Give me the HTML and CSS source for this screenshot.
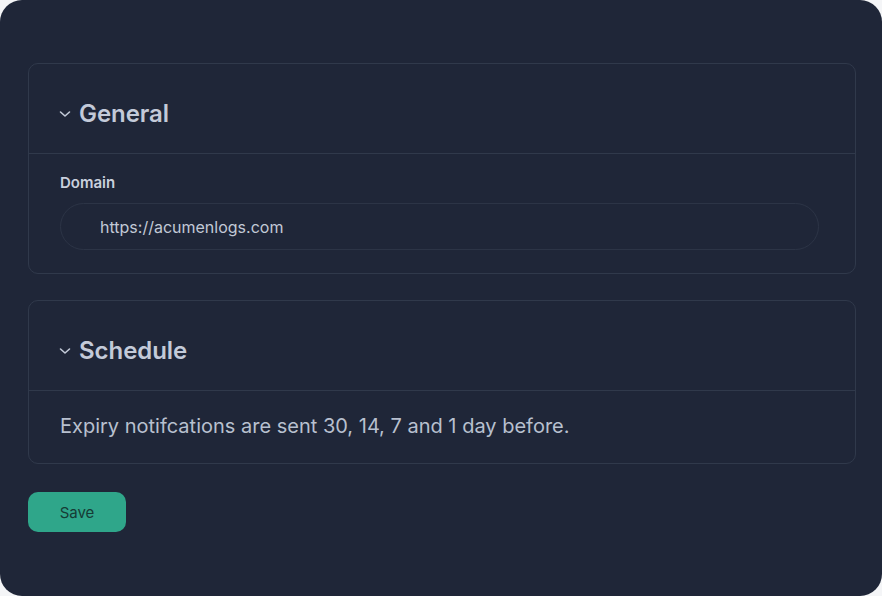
FILE: index.html
```html
<!DOCTYPE html>
<html>
<head>
<meta charset="utf-8">
<link rel="stylesheet" href="styles.css">
</head>
<body>
<div class="frame">
  <section class="card">
    <div class="card-head">
      <svg class="chev" width="12" height="12" viewBox="0 0 12 12"><path d="M1.5 4 L6 8 L10.5 4" fill="none" stroke="#c3cad8" stroke-width="1.6" stroke-linecap="round" stroke-linejoin="round"/></svg>
      <h2 class="card-title">General</h2>
    </div>
    <div class="card-body general-body">
      <label class="label">Domain</label>
      <div class="input">https://acumenlogs.com</div>
    </div>
  </section>
  <section class="card">
    <div class="card-head">
      <svg class="chev" width="12" height="12" viewBox="0 0 12 12"><path d="M1.5 4 L6 8 L10.5 4" fill="none" stroke="#c3cad8" stroke-width="1.6" stroke-linecap="round" stroke-linejoin="round"/></svg>
      <h2 class="card-title">Schedule</h2>
    </div>
    <div class="card-body schedule-body">
      <p class="note">Expiry notifcations are sent 30, 14, 7 and 1 day before.</p>
    </div>
  </section>
  <div class="actions">
    <button class="save">Save</button>
  </div>
</div>
</body>
</html>
```
FILE: styles.css
```css
html, body {
  margin: 0;
  padding: 0;
  background: #f4f5f7;
}
body {
  font-family: Inter, "Noto Sans", sans-serif;
}
.frame {
  width: 882px;
  height: 596px;
  box-sizing: border-box;
  background: #1f2638;
  border-radius: 22px;
  padding: 63px 26px 0 28px;
  display: flex;
  flex-direction: column;
  gap: 26px;
}
.card {
  border: 1px solid #30394b;
  border-radius: 10px;
}
.card-head {
  height: 90px;
  box-sizing: border-box;
  padding-top: 10px;
  display: flex;
  align-items: center;
  padding-left: 30px;
  gap: 8px;
  border-bottom: 1px solid #30394b;
}
.chev {
  display: block;
  margin-top: 1px;
}
.card-title {
  margin: 0;
  font-size: 24px;
  font-weight: 600;
  color: #c3cad9;
  letter-spacing: -0.05px;
}
.card-body {
  padding-left: 31px;
  padding-right: 36px;
}
.general-body {
  padding-top: 19px;
  padding-bottom: 23px;
}
.label {
  display: block;
  font-size: 15px;
  font-weight: 600;
  color: #c9d0dd;
  line-height: 20px;
  margin-bottom: 10px;
}
.input {
  height: 47px;
  box-sizing: border-box;
  border: 1.5px solid #2c3446;
  border-radius: 24px;
  padding-left: 39px;
  display: flex;
  align-items: center;
  font-size: 16px;
  color: #c2c9d6;
}
.schedule-body {
  padding-top: 20px;
  padding-bottom: 22px;
}
.note {
  margin: 0;
  font-size: 20px;
  line-height: 30px;
  color: #b8c0cf;
}
.actions {
  margin-top: 2px;
}
.save {
  width: 98px;
  height: 40px;
  border: none;
  border-radius: 10px;
  background: #2fa68a;
  color: #163b35;
  font-family: Inter, "Noto Sans", sans-serif;
  font-size: 15px;
  cursor: pointer;
}
```
